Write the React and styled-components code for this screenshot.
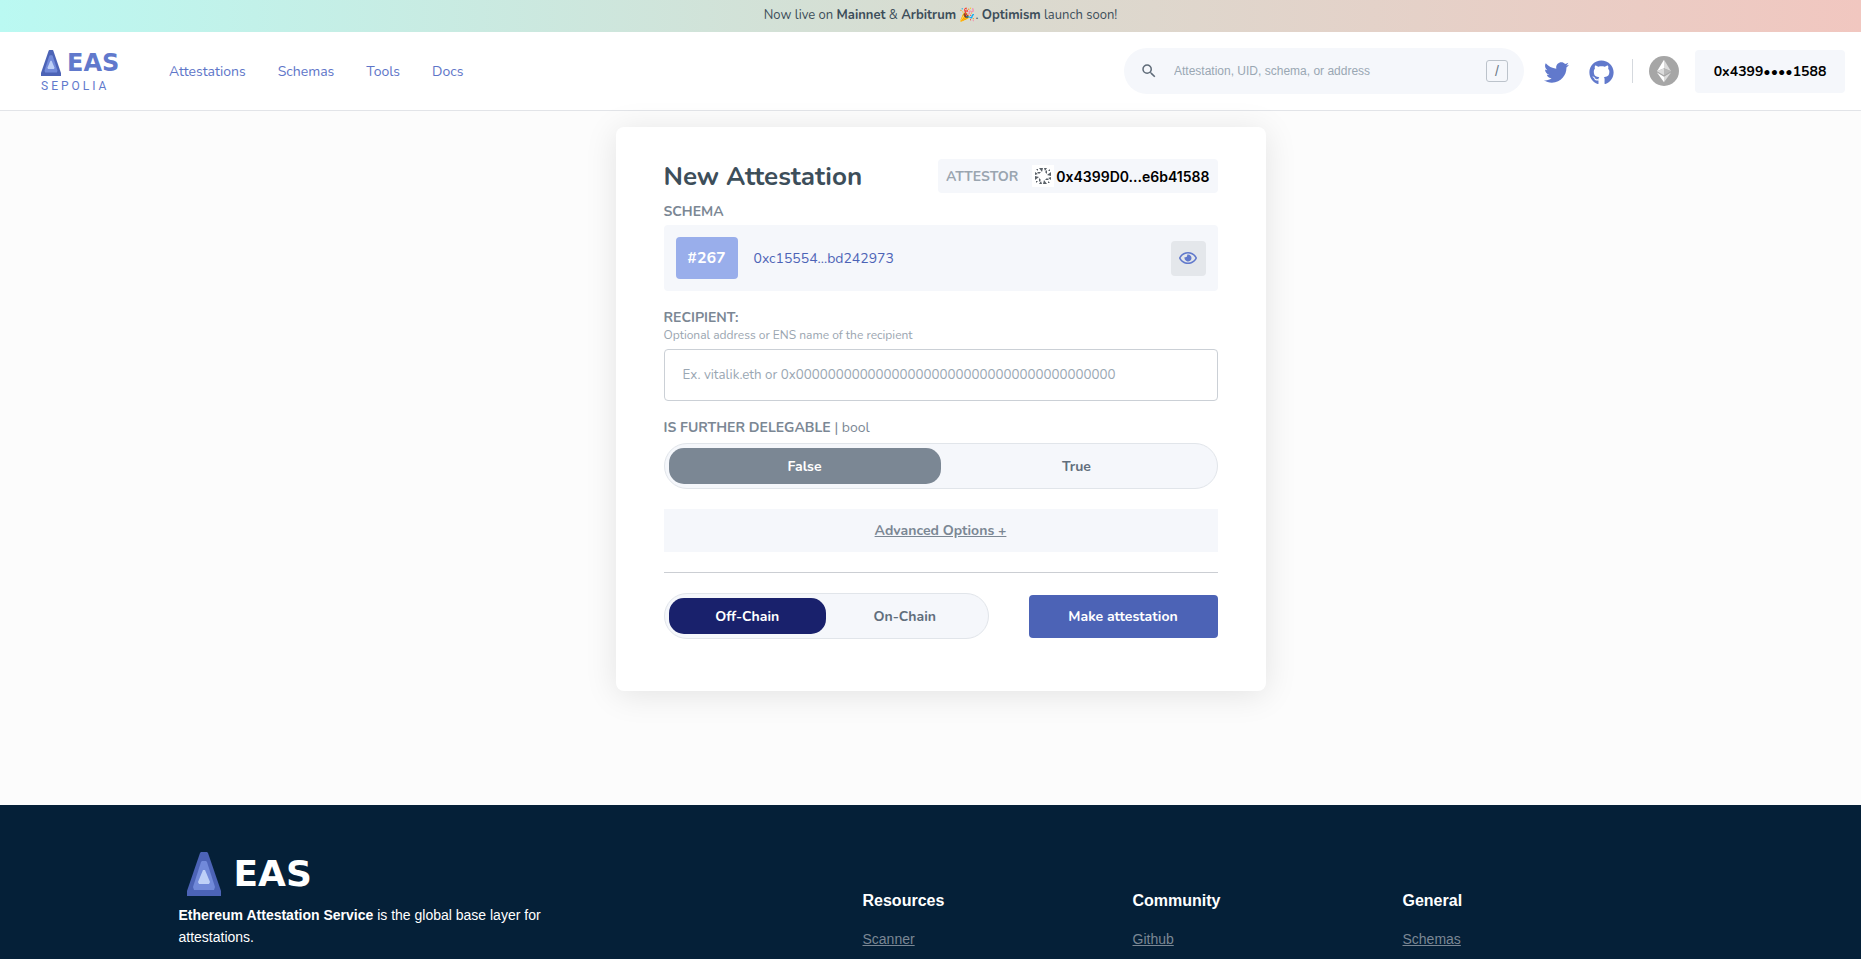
import { useState } from "react";
import styled, { createGlobalStyle } from "styled-components";
import { FaTwitter, FaGithub, FaRegEye } from "react-icons/fa";
import { MdSearch } from "react-icons/md";

const GlobalStyle = createGlobalStyle`
  * {
    box-sizing: border-box;
  }
  body {
    margin: 0;
    background: #fcfcfc;
    font-family: Nunito, Lato, sans-serif;
    font-size: 14px;
  }
  button,
  input {
    font-family: inherit;
  }
`;

const Page = styled.div`
  display: flex;
  flex-direction: column;
  min-height: 100vh;
`;

const Banner = styled.div`
  height: 32px;
  padding: 4px 20px 4px 40px;
  font-size: 13px;
  line-height: 22px;
  text-align: center;
  color: #3d4e5a;
  background: linear-gradient(90deg, #baf9f2 0%, #d8dcd1 50%, #f1c7c0 100%);
`;

// Header
const Header = styled.header`
  display: flex;
  align-items: center;
  justify-content: space-between;
  height: 79px;
  padding: 0 16px 0 41px;
  background: #fff;
  border-bottom: 1px solid #e2e4e8;
`;

const HeaderSide = styled.div`
  display: flex;
  align-items: center;
  padding-top: ${(props) => props.$top || "0"};
`;

const Logo = styled.a`
  display: flex;
  flex-direction: column;
  gap: 2px;
  width: 96px;
  color: #6179cc;
  text-decoration: none;
`;

const LogoRow = styled.span`
  display: flex;
  align-items: center;
  gap: ${(props) => props.$gap};
`;

const LogoName = styled.span`
  font-family: "DejaVu Sans", sans-serif;
  font-weight: 700;
  font-size: ${(props) => props.$size};
  line-height: 1;
  color: ${(props) => props.$color};
`;

const Network = styled.span`
  font-family: Roboto, sans-serif;
  font-size: 12px;
  line-height: 16px;
  letter-spacing: 3px;
`;

const Nav = styled.nav`
  display: flex;
  gap: 32px;
  margin-left: 32px;
`;

const NavLink = styled.a`
  font-size: 14px;
  line-height: 20px;
  color: #5e75c8;
  text-decoration: none;
`;

const SearchBox = styled.label`
  display: flex;
  align-items: center;
  width: 400px;
  height: 46px;
  padding: 0 16px;
  color: #5f6b78;
  background: #f5f7fb;
  border-radius: 24px;
`;

const SearchInput = styled.input`
  flex: 1;
  min-width: 0;
  margin: 0 16px;
  padding: 0;
  border: 0;
  outline: 0;
  background: none;
  font-family: "Liberation Sans", Arial, sans-serif;
  font-size: 12px;
  color: #3d4e5a;
  &::placeholder {
    color: #9aa7b3;
    opacity: 1;
  }
`;

const Slash = styled.kbd`
  display: grid;
  place-items: center;
  width: 22px;
  height: 22px;
  border: 1px solid #bcc3cb;
  border-radius: 3px;
  font-family: "Liberation Sans", Arial, sans-serif;
  font-size: 14px;
  color: #6b7785;
`;

const Social = styled.div`
  display: flex;
  align-items: center;
  gap: 20px;
  margin-left: 20px;
  padding: 2px 18px 0 0;
  a {
    display: flex;
    color: #6179cc;
  }
`;

const Divider = styled.div`
  width: 1px;
  height: 24px;
  margin-right: 16px;
  background: #d5d9de;
`;

const Account = styled.button`
  width: 150px;
  height: 43px;
  margin-left: 16px;
  padding: 0;
  border: 0;
  border-radius: 4px;
  background: #f5f7fb;
  font-size: 14px;
  font-weight: 700;
  color: #000;
`;

// Attestation form
const Main = styled.main`
  display: flex;
  justify-content: center;
  padding: 16px 20px 114px 40px;
`;

const Card = styled.form`
  width: 100%;
  max-width: 650px;
  padding: 32px 48px 52px;
  background: #fff;
  border-radius: 8px;
  box-shadow: 0 4px 33px rgba(0, 0, 0, 0.1);
`;

const Row = styled.div`
  display: flex;
  align-items: center;
  justify-content: space-between;
`;

const Title = styled.h1`
  margin: 0;
  padding-top: 2px;
  font-size: 26px;
  line-height: 32px;
  font-weight: 700;
  color: #3d4e5a;
`;

const Attestor = styled.div`
  display: flex;
  align-items: center;
  height: 34px;
  padding: 0 8px;
  background: #f5f7fb;
  border-radius: 4px;
  font-weight: 700;
  color: #9aa5b0;
`;

const Avatar = styled.svg`
  width: 22px;
  height: 22px;
  margin: 0 2px 0 14px;
  background: #fff;
`;

const Address = styled.span`
  font-family: Inter, sans-serif;
  font-size: 14px;
  font-weight: 600;
  color: #000;
`;

const Label = styled.label`
  display: block;
  margin-top: ${(props) => props.$top};
  font-size: 14px;
  line-height: 18px;
  font-weight: 700;
  color: #7b8794;
`;

const Light = styled.span`
  font-weight: 400;
`;

const Hint = styled.div`
  font-size: 12px;
  line-height: 16px;
  color: #9aa5b0;
`;

const Schema = styled.div`
  display: flex;
  align-items: center;
  height: 66px;
  margin-top: 4px;
  padding: 12px;
  background: #f5f7fb;
  border-radius: 4px;
`;

const Badge = styled.div`
  display: grid;
  place-items: center;
  width: 62px;
  height: 42px;
  background: #99aeeb;
  border-radius: 4px;
  font-size: 16px;
  font-weight: 700;
  color: #fff;
`;

const SchemaLink = styled.a`
  flex: 1;
  margin-left: 16px;
  font-size: 14px;
  color: #4c63b6;
  text-decoration: none;
`;

const EyeButton = styled.button`
  display: grid;
  place-items: center;
  width: 35px;
  height: 35px;
  padding: 0;
  border: 0;
  border-radius: 4px;
  background: #e4e7eb;
  color: #6179cc;
`;

const TextInput = styled.input`
  display: block;
  width: 100%;
  height: 52px;
  margin-top: 6px;
  padding: 0 18px;
  border: 1px solid #cbd0d6;
  border-radius: 4px;
  background: #fff;
  color: #3d4e5a;
  &::placeholder {
    color: #9aa7b3;
    opacity: 1;
  }
`;

const Switch = styled.div`
  display: flex;
  width: ${(props) => props.$width};
  height: 46px;
  margin-top: ${(props) => props.$top || "0"};
  padding: 4px;
  background: #f5f7fb;
  border: 1px solid #e1e5ea;
  border-radius: 24px;
`;

const Option = styled.label`
  display: grid;
  place-items: center;
  flex: 1;
  border-radius: 15px;
  font-size: 14px;
  font-weight: 700;
  color: #616e7c;
  cursor: pointer;
  &:has(input:checked) {
    background: ${(props) => props.$active};
    color: #fff;
  }
  input {
    appearance: none;
    width: 0;
    height: 0;
    margin: 0;
    grid-area: 1 / 1;
  }
  span {
    grid-area: 1 / 1;
  }
`;

const Advanced = styled.button`
  display: block;
  width: 100%;
  height: 43px;
  margin-top: 20px;
  padding: 0;
  border: 0;
  background: #f5f7fb;
  font-size: 14px;
  font-weight: 700;
  color: #7b8794;
  text-decoration: underline;
`;

const Line = styled.hr`
  height: 1px;
  margin: 20px 0;
  border: 0;
  background: #cbced3;
`;

const Submit = styled.button`
  width: 189px;
  height: 43px;
  padding: 0;
  border: 0;
  border-radius: 4px;
  background: #4c63b6;
  font-size: 14px;
  font-weight: 700;
  color: #fff;
`;

// Footer
const Footer = styled.footer`
  flex: 1;
  padding: 47px 20px 8px;
  background: #052038;
  font-family: "Liberation Sans", Arial, sans-serif;
  color: #fff;
`;

const FooterGrid = styled.div`
  display: grid;
  grid-template-columns: 684px repeat(3, 1fr);
  max-width: 1504px;
  margin: 0 auto;
  padding-right: 10px;
`;

const About = styled.p`
  width: 370px;
  margin: 8px 0 0;
  line-height: 22px;
`;

const FooterLogo = styled.div`
  padding-left: 8px;
`;

const Column = styled.div`
  display: flex;
  flex-direction: column;
  align-items: flex-start;
  gap: 20px;
  padding-top: 40px;
`;

const ColumnTitle = styled.h2`
  margin: 0;
  font-size: 16px;
  line-height: 18px;
`;

const FooterLink = styled.a`
  font-size: 14px;
  line-height: 18px;
  color: #7b8794;
`;

function Mark({ width, height }) {
  return (
    <svg width={width} height={height} viewBox="0 0 34 44" aria-hidden="true">
      <path d="M14 0h6l1 1 13 38v5H0v-5L13 1z" fill="#4c63b6" />
      <path d="M15 9h4l1 1 8 25-1 3H7l-1-3 8-25z" fill="#7189d9" />
      <path d="M16 18h2l5 12-1 2H12l-1-2z" fill="#bed0f7" />
    </svg>
  );
}

function Ethereum() {
  return (
    <svg width="30" height="30" viewBox="0 0 32 32" aria-label="Ethereum">
      <circle cx="16" cy="16" r="16" fill="#a6a6a6" />
      <path d="M16 4v9l7.5 3.3z" fill="#dcdcdc" />
      <path d="M16 4L8.5 16.3 16 13z" fill="#fff" />
      <path d="M16 22v6l7.5-10.4z" fill="#dcdcdc" />
      <path d="M16 28v-6l-7.5-4.4z" fill="#fff" />
      <path d="M16 20.6l7.5-4.3L16 13z" fill="#b8b8b8" />
      <path d="M8.5 16.3l7.5 4.3V13z" fill="#dcdcdc" />
    </svg>
  );
}

function Identicon() {
  return (
    <Avatar viewBox="0 0 22 22" aria-hidden="true">
      <g fill="#5a6168">
        {[0, 90, 180, 270].map((angle) => (
          <g key={angle} transform={`rotate(${angle} 11 11)`}>
            <path d="M4 4h2v2z" />
            <path d="M7 3h4l-1 4z" />
            <path d="M12 3h3l-2 3z" />
            <path d="M5 7h4L7 9z" />
          </g>
        ))}
      </g>
    </Avatar>
  );
}

function Toggle({ name, options, active, width, top, label }) {
  let [value, setValue] = useState(options[0]);

  return (
    <Switch role="radiogroup" aria-label={label} $width={width} $top={top}>
      {options.map((option) => (
        <Option key={option} $active={active}>
          <input
            type="radio"
            name={name}
            checked={value === option}
            onChange={() => setValue(option)}
          />
          <span>{option}</span>
        </Option>
      ))}
    </Switch>
  );
}

const navLinks = ["Attestations", "Schemas", "Tools", "Docs"];

const footerColumns = [
  { title: "Resources", links: ["Scanner"] },
  { title: "Community", links: ["Github"] },
  { title: "General", links: ["Schemas"] },
];

function App() {
  return (
    <Page>
      <GlobalStyle />
      <Banner>
        Now live on <b>Mainnet</b> &amp; <b>Arbitrum</b> 🎉. <b>Optimism</b>{" "}
        launch soon!
      </Banner>

      <Header>
        <HeaderSide $top="2px">
          <Logo href="#">
            <LogoRow $gap="6px">
              <Mark width={20} height={26} />
              <LogoName $size="24px" $color="#6179cc">
                EAS
              </LogoName>
            </LogoRow>
            <Network>SEPOLIA</Network>
          </Logo>
          <Nav>
            {navLinks.map((link) => (
              <NavLink href="#" key={link}>
                {link}
              </NavLink>
            ))}
          </Nav>
        </HeaderSide>
        <HeaderSide>
          <SearchBox>
            <MdSearch size={18} />
            <SearchInput
              type="text"
              aria-label="Search"
              placeholder="Attestation, UID, schema, or address"
            />
            <Slash>/</Slash>
          </SearchBox>
          <Social>
            <a href="#" aria-label="Twitter">
              <FaTwitter size={25} />
            </a>
            <a href="#" aria-label="Github">
              <FaGithub size={25} />
            </a>
          </Social>
          <Divider />
          <Ethereum />
          <Account type="button">0x4399••••1588</Account>
        </HeaderSide>
      </Header>

      <Main>
        <Card onSubmit={(e) => e.preventDefault()}>
          <Row>
            <Title>New Attestation</Title>
            <Attestor>
              ATTESTOR
              <Identicon />
              <Address>0x4399D0...e6b41588</Address>
            </Attestor>
          </Row>

          <Label as="div" $top="10px">
            SCHEMA
          </Label>
          <Schema>
            <Badge>#267</Badge>
            <SchemaLink href="#">0xc15554...bd242973</SchemaLink>
            <EyeButton type="button" aria-label="View schema">
              <FaRegEye size={18} />
            </EyeButton>
          </Schema>

          <Label htmlFor="recipient" $top="18px">
            RECIPIENT:
          </Label>
          <Hint>Optional address or ENS name of the recipient</Hint>
          <TextInput
            id="recipient"
            type="text"
            placeholder="Ex. vitalik.eth or 0x0000000000000000000000000000000000000000"
          />

          <Label as="div" $top="18px">
            IS FURTHER DELEGABLE <Light>| bool</Light>
          </Label>
          <Toggle
            name="delegable"
            label="Is further delegable"
            options={["False", "True"]}
            active="#7b8794"
            width="100%"
            top="6px"
          />

          <Advanced type="button">Advanced Options +</Advanced>
          <Line />

          <Row>
            <Toggle
              name="chain"
              label="Chain"
              options={["Off-Chain", "On-Chain"]}
              active="#19216c"
              width="325px"
            />
            <Submit type="submit">Make attestation</Submit>
          </Row>
        </Card>
      </Main>

      <Footer>
        <FooterGrid>
          <div>
            <FooterLogo>
              <LogoRow $gap="13px">
                <Mark width={34} height={44} />
                <LogoName $size="36px" $color="#fff">
                  EAS
                </LogoName>
              </LogoRow>
            </FooterLogo>
            <About>
              <b>Ethereum Attestation Service</b> is the global base layer for
              attestations.
            </About>
          </div>
          {footerColumns.map((column) => (
            <Column key={column.title}>
              <ColumnTitle>{column.title}</ColumnTitle>
              {column.links.map((link) => (
                <FooterLink href="#" key={link}>
                  {link}
                </FooterLink>
              ))}
            </Column>
          ))}
        </FooterGrid>
      </Footer>
    </Page>
  );
}

export default App;
